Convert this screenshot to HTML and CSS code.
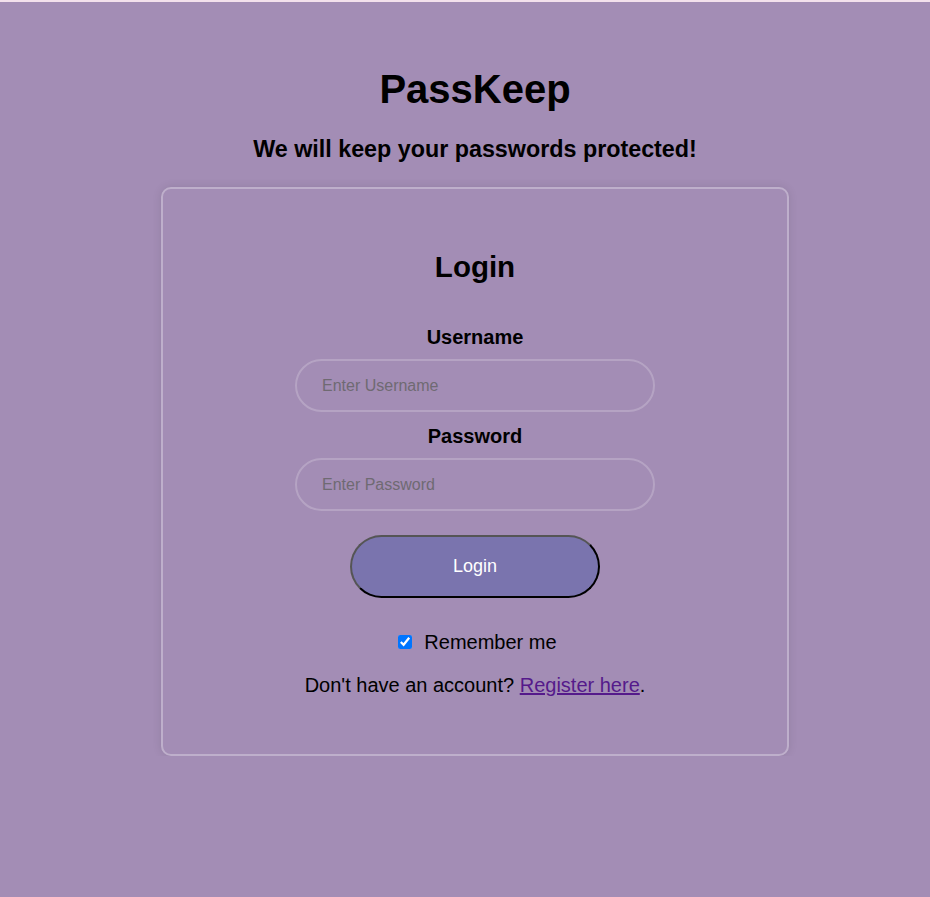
FILE: index.html
```html
<!DOCTYPE html>
<html lang="en">
<head>
<meta charset="utf-8">
<title>PassKeep</title>
<link rel="stylesheet" href="styles.css">
</head>
<body>
<div class="topbar"></div>
<main class="page">
  <h1 class="brand">PassKeep</h1>
  <p class="tagline">We will keep your passwords protected!</p>
  <section class="card">
    <h2 class="card-title">Login</h2>
    <form class="form">
      <label class="label" for="username">Username</label>
      <input class="field" id="username" type="text" placeholder="Enter Username">
      <label class="label" for="password">Password</label>
      <input class="field" id="password" type="password" placeholder="Enter Password">
      <button class="btn" type="button">Login</button>
      <label class="remember"><input class="check" type="checkbox" checked> Remember me</label>
      <p class="register">Don't have an account? <a class="link" href="#">Register here</a>.</p>
    </form>
  </section>
</main>
</body>
</html>
```
FILE: styles.css
```css
html, body {
  margin: 0;
  padding: 0;
  background: #a38db5;
}
body {
  font-family: "Liberation Sans", Arial, sans-serif;
  color: #000;
}
.topbar {
  height: 2px;
  background: #f3e1ec;
}
.page {
  display: flex;
  flex-direction: column;
  align-items: center;
  padding-top: 64px;
  padding-left: 20px;
}
.brand {
  margin: 0;
  font-size: 40px;
  line-height: 46px;
  font-weight: bold;
}
.tagline {
  margin: 23px 0 0;
  font-size: 23.3px;
  line-height: 28px;
  font-weight: bold;
}
.card {
  box-sizing: border-box;
  width: 628px;
  height: 569px;
  margin-top: 24px;
  border: 2px solid rgba(255, 255, 255, 0.3);
  border-radius: 10px;
  box-shadow: 0 0 10px rgba(0, 0, 0, 0.1);
  display: flex;
  flex-direction: column;
  align-items: center;
  padding-top: 61px;
}
.card-title {
  margin: 0;
  font-size: 29.5px;
  line-height: 34px;
  font-weight: bold;
}
.form {
  display: flex;
  flex-direction: column;
  align-items: center;
  margin-top: 41px;
}
.label {
  font-size: 20px;
  line-height: 24px;
  font-weight: bold;
}
.field {
  box-sizing: border-box;
  width: 360px;
  height: 53px;
  margin: 10px 0 12px;
  padding: 0 25px;
  border: 2px solid rgba(255, 255, 255, 0.2);
  border-radius: 30px;
  background: transparent;
  font-family: "Liberation Sans", Arial, sans-serif;
  font-size: 16px;
  color: #333;
  outline: none;
}
.field::placeholder {
  color: #6f6a72;
}
.btn {
  box-sizing: border-box;
  width: 250px;
  height: 63px;
  margin-top: 12px;
  border: 2px solid #555;
  border-bottom-color: #000;
  border-right-color: #000;
  border-radius: 32px;
  background: #7a74ae;
  color: #fff;
  font-family: "Liberation Sans", Arial, sans-serif;
  font-size: 18px;
}
.remember {
  margin-top: 32px;
  margin-left: 5px;
  font-size: 20px;
  line-height: 24px;
  display: flex;
  align-items: center;
  gap: 8px;
}
.check {
  width: 14px;
  height: 14px;
  margin: 0 4px 0 0;
  accent-color: #0075ff;
}
.register {
  margin: 19px 0 0;
  font-size: 20px;
  line-height: 24px;
}
.link {
  color: #551a8b;
}
```
